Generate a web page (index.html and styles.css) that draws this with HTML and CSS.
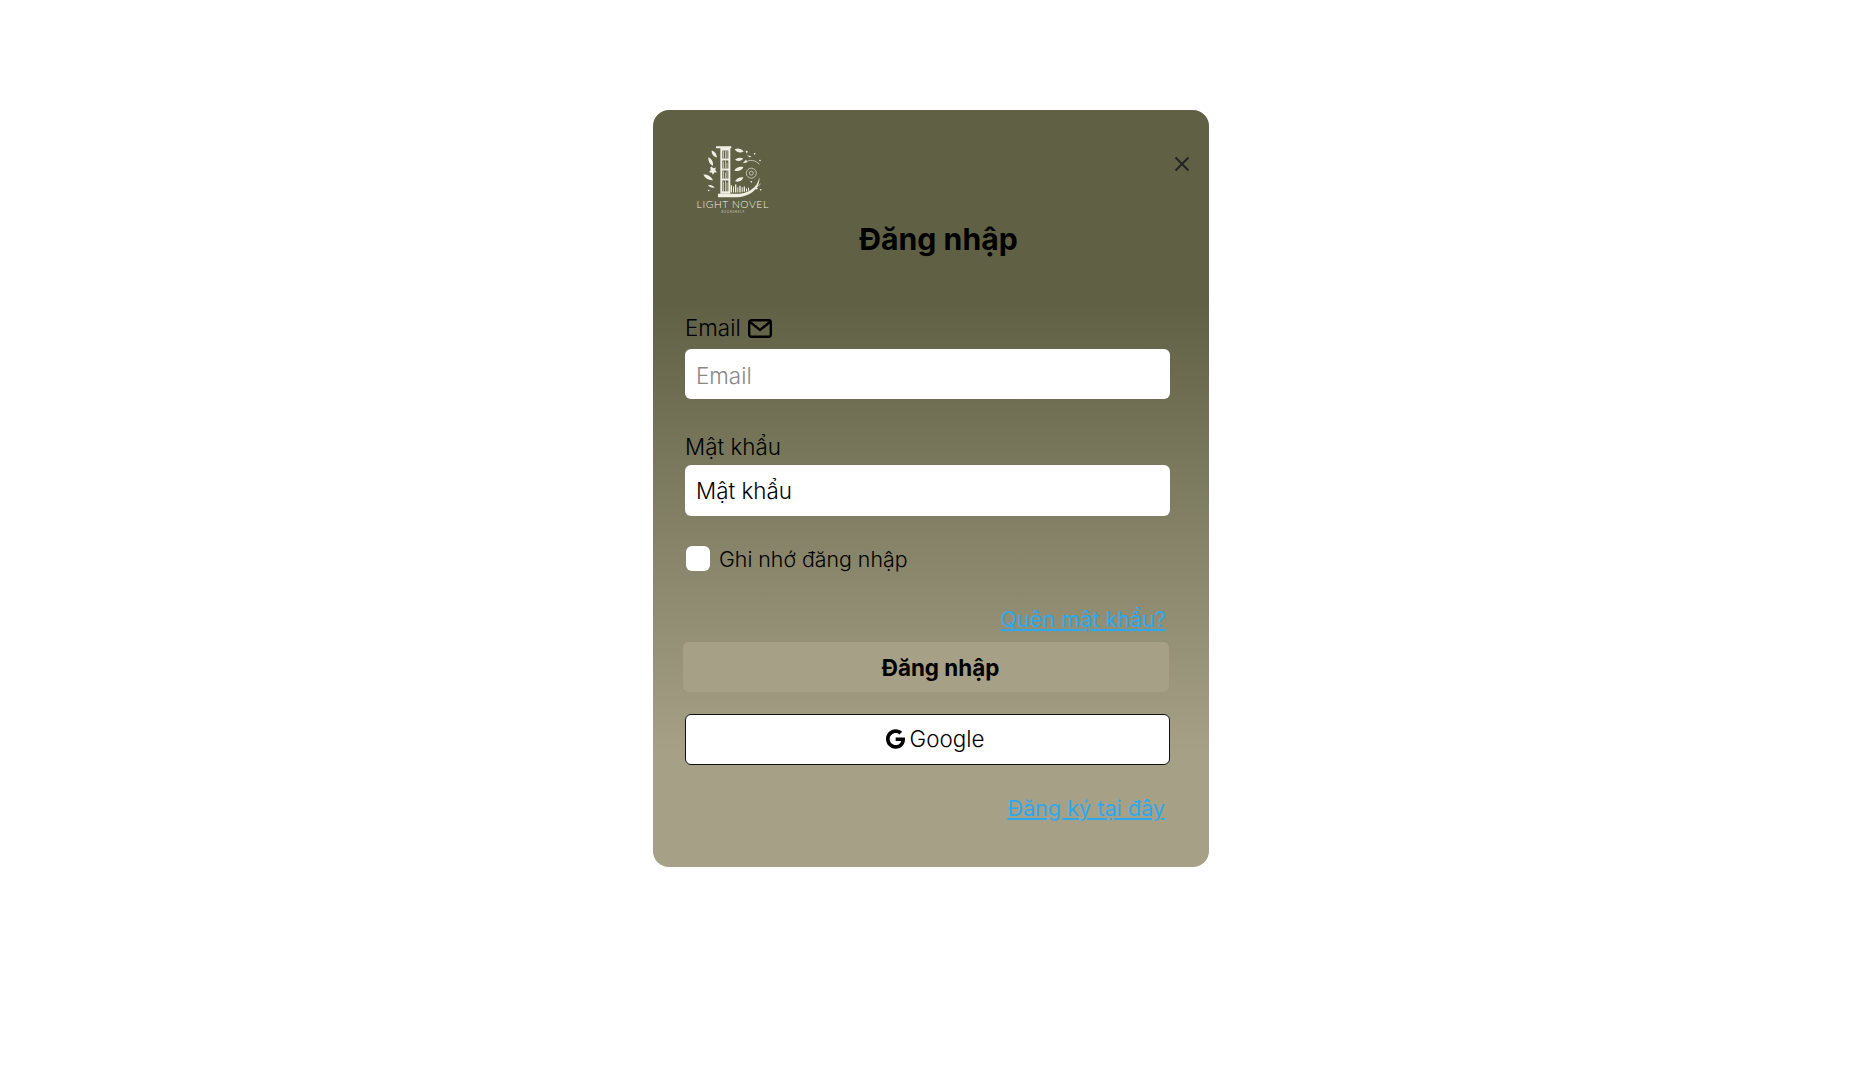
FILE: index.html
```html
<!DOCTYPE html>
<html lang="vi">
<head>
  <meta charset="UTF-8" />
  <title>Đăng nhập</title>
  <link rel="stylesheet" href="styles.css">
</head>
<body>
  <div class="modal">
    <button class="close" type="button" aria-label="Đóng">
      <svg viewBox="0 0 16 16" width="16" height="16"><path d="M1.5 1.5l13 13M14.5 1.5l-13 13" /></svg>
    </button>

    <svg class="logo" viewBox="40 40 240 215" width="80" height="72">
      <g class="logo-fill">
        <path d="M106 49h46v6h-3v137h-30V55h-13zM125 62v24h18V62zM125 92v24h18V92zM125 122v24h18v-24zM125 152v32h18v-32z" fill-rule="evenodd" />
        <path d="M128 62h2v24h-2zM133 62h2v24h-2zM138 62h2v24h-2zM128 96h2v20h-2zM133 92h2v24h-2zM138 98h2v18h-2zM128 124h2v22h-2zM133 128h2v18h-2zM138 122h2v24h-2zM128 156h2v28h-2zM133 152h2v32h-2zM138 158h2v26h-2z" />
        <path d="M112 192h52c36 0 66-16 72-50 3 36-30 60-72 60h-52z" />
        <path d="M150 166h4v22h-4zM157 170h3v18h-3zM163 164h4v24h-4zM170 172h3v16h-3zM176 168h4v20h-4zM183 172h3v15h-3zM189 170h4v16h-4zM196 176h3v9h-3zM202 174h3v9h-3z" />
        <path d="M93 62c10 3 15 11 16 21-11-3-17-11-16-21zM83 82c11 5 15 14 14 26-10-5-15-14-14-26zM92 110l6 5 7-2-1 8 5 6-8 1-4 7-4-7-8-1 5-6-1-8zM68 134c12-1 23 5 29 17-13 1-24-5-29-17zM82 166c8-2 15 1 20 7-8 2-15-1-20-7z" />
        <path d="M162 58c10-4 20-2 27 7-10 5-20 3-27-7zM163 90c7-7 16-8 25-4-6 8-15 10-25 4zM161 122c6-9 16-13 27-10-5 10-15 14-27 10zM163 154c6-9 15-13 25-11-4 10-13 15-25 11zM194 62l8 3-4 6zM186 100l10-10 4 7zM198 76l14 3-4 4z" />
        <circle cx="228" cy="176" r="3" /><circle cx="222" cy="72" r="2.5" /><circle cx="238" cy="92" r="2.5" /><circle cx="84" cy="182" r="2.5" /><circle cx="212" cy="156" r="2.5" /><circle cx="240" cy="180" r="2.5" />
      </g>
      <g class="logo-line">
        <circle cx="212" cy="130" r="15" /><circle cx="212" cy="130" r="6" />
        <path d="M192 98c14-10 34-8 44 6M228 172l12-10" />
      </g>
      <text class="logo-name" x="156" y="235" text-anchor="middle">LIGHT NOVEL</text>
      <text class="logo-sub" x="157" y="251" text-anchor="middle">BOOKSHELF</text>
    </svg>

    <h1 class="title">Đăng nhập</h1>

    <form class="form">
      <div class="field field-email">
        <label for="email">Email
          <svg class="mail" viewBox="0 0 24 19" width="24" height="19"><rect x="1.2" y="1.2" width="21.6" height="16.6" rx="2.2" /><path d="M2 3l10 8 10-8" /></svg>
        </label>
        <input id="email" type="email" placeholder="Email">
      </div>

      <div class="field field-password">
        <label for="password">Mật khẩu</label>
        <input id="password" type="text" value="Mật khẩu">
      </div>

      <label class="remember"><span class="box"></span> Ghi nhớ đăng nhập</label>

      <div class="link-row forgot"><a href="#">Quên mật khẩu?</a></div>

      <button class="btn-login" type="button">Đăng nhập</button>

      <button class="btn-google" type="button">
        <svg viewBox="0 0 488 512" width="19" height="20"><path d="M488 261.8C488 403.3 391.1 504 248 504 110.8 504 0 393.2 0 256S110.8 8 248 8c66.8 0 123 24.5 166.3 64.9l-67.5 64.9C258.5 52.6 94.3 116.6 94.3 256c0 86.5 69.1 156.6 153.7 156.6 98.2 0 135-70.4 140.8-106.9H248v-85.3h236.1c2.3 12.7 3.9 24.9 3.9 41.4z"/></svg>
        Google
      </button>

      <div class="link-row register"><a href="#">Đăng ký tại đây</a></div>
    </form>
  </div>
</body>
</html>
```

FILE: styles.css
```css
* { box-sizing: border-box; }
body { margin: 0; background: #fff; font-family: Inter, "Noto Sans", sans-serif; color: #000; }

.modal { position: relative; width: 556px; height: 757px; margin: 110px 0 0 653px; padding: 33px 39px 0 32px; border-radius: 16px; background: linear-gradient(180deg, #606045 0%, #606045 25%, #a6a186 85%, #a6a186 100%); }

.close { position: absolute; top: 46px; right: 19px; padding: 0; border: 0; background: none; line-height: 0; }
.close path { stroke: #222; stroke-width: 1.8; fill: none; }

.logo { display: block; margin-left: 9px; }
.logo-fill { fill: #f1efe4; }
.logo-line { fill: none; stroke: #f1efe4; stroke-width: 2; }
.logo-name { font-family: Lato, sans-serif; font-size: 31px; font-weight: 300; letter-spacing: 1.8px; fill: #f1efe4; }
.logo-sub { font-family: Lato, sans-serif; font-size: 9px; letter-spacing: 2px; fill: #c9c7b8; }

.title { margin: 4px 0 0; padding-left: 22px; font-size: 30.2px; line-height: 40px; font-weight: 700; text-align: center; }

.form { margin-top: 54px; }
.field label { display: flex; align-items: center; gap: 7px; font-size: 22.4px; font-weight: 300; line-height: 30px; }
.field input { display: block; width: 100%; padding: 0 11px; border: 0; border-radius: 6px; background: #fff; font: 300 22.4px Inter, sans-serif; color: #000; outline: none; }
.field input::placeholder { color: #888; }
.field-email input { height: 50px; margin-top: 6px; padding-top: 2px; }
.field-password { margin-top: 33px; }
.field-password input { height: 51px; margin-top: 3px; }
.mail rect, .mail path { fill: none; stroke: #000; stroke-width: 2.4; }

.remember { display: flex; align-items: center; gap: 9px; margin: 29px 0 0 1px; font-size: 21.3px; font-weight: 300; line-height: 28px; }
.box { width: 24px; height: 25px; margin-bottom: 2px; border-radius: 6px; background: #fff; }

.link-row { text-align: right; font-size: 21.6px; font-weight: 400; line-height: 30px; }
.link-row a { color: #2ea8ee; }
.forgot { margin-top: 31px; padding-right: 4px; }
.register { margin-top: 28px; padding-right: 5px; }

.btn-login { display: block; width: 486px; height: 50px; margin: 8px 0 0 -2px; padding-left: 35px; border: 0; border-radius: 6px; background: #a6a186; font: 700 22.4px Inter, sans-serif; color: #000; }
.btn-google { display: flex; align-items: center; justify-content: center; gap: 5px; width: 100%; height: 51px; margin-top: 22px; padding: 0 0 2px 15px; border: 1.5px solid #111; border-radius: 6px; background: #fff; font: 300 22.4px Inter, sans-serif; color: #000; }
```
